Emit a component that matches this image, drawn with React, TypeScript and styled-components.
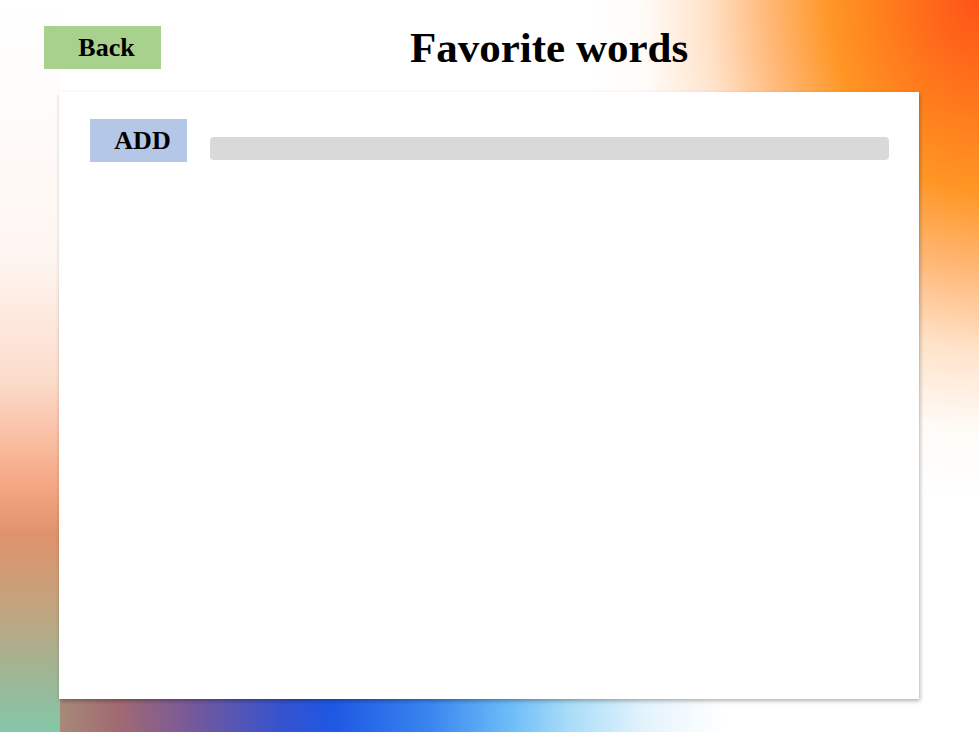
import React, { useState } from "react";
import styled, { createGlobalStyle } from "styled-components";

const GlobalStyle = createGlobalStyle`
  html, body {
    margin: 0;
    padding: 0;
  }
  body {
    font-family: "Liberation Serif", "Times New Roman", serif;
    background-color: #ffffff;
  }
`;

const Page = styled.div`
  width: 979px;
  height: 732px;
  overflow: hidden;
  background-color: #fff;
  background-image:
    linear-gradient(to bottom, rgba(255, 255, 255, 0) 0%, rgba(253, 240, 232, 0.6) 35%, #fcdccb 52%, #f6a884 66%, #e0926c 73%, #c2a47e 83%, #a4b392 91%, #84c6a8 100%),
    linear-gradient(to right, #86c4a4 0%, #a89078 5%, #a26a72 12%, #7a5a98 19%, #3452d0 29%, #1e58e4 34%, #3a86f0 44%, #6cbcf8 52%, #a8dcf8 58%, #e4f4fc 66%, rgba(255, 255, 255, 0) 74%),
    radial-gradient(ellipse 390px 500px at 100% 0%, #ff5218 0%, #ff7a1c 22%, #ff9624 38%, #ffb878 54%, rgba(255, 215, 180, 0.7) 70%, rgba(255, 245, 235, 0.4) 86%, rgba(255, 255, 255, 0) 100%);
  background-size: 60px 100%, 100% 40px, 100% 100%;
  background-position: 0 0, 0 100%, 0 0;
  background-repeat: no-repeat;
`;

const Header = styled.header`
  display: flex;
  align-items: flex-start;
  height: 92px;
  padding: 26px 0 0 44px;
  box-sizing: border-box;
`;

const BackButton = styled.button`
  width: 117px;
  height: 43px;
  border: none;
  background: #a9d18e;
  font-family: "Liberation Serif", "Times New Roman", serif;
  font-weight: 700;
  font-size: 26px;
  color: #000;
  padding: 0 0 0 8px;
  cursor: pointer;
`;

const Title = styled.h1`
  margin: 0 0 0 249px;
  font-size: 43px;
  font-weight: 700;
  line-height: 44px;
  color: #000;
`;

const Panel = styled.main`
  margin-left: 59px;
  width: 860px;
  height: 607px;
  background: #fff;
  box-shadow: 1px 2px 4px rgba(0, 0, 0, 0.3);
  padding: 27px 30px 0 31px;
  box-sizing: border-box;
`;

const Toolbar = styled.div`
  display: flex;
  align-items: flex-end;
  gap: 23px;
`;

const AddButton = styled.button`
  width: 97px;
  height: 43px;
  flex: none;
  border: none;
  background: #b4c7e7;
  font-family: "Liberation Serif", "Times New Roman", serif;
  font-weight: 700;
  font-size: 26px;
  color: #000;
  padding: 0 0 0 8px;
  cursor: pointer;
`;

const WordInput = styled.input`
  flex: 1;
  height: 23px;
  margin-bottom: 2px;
  border: none;
  border-radius: 4px;
  background: #d9d9d9;
  outline: none;
  padding: 0 8px;
  font-size: 16px;
  box-sizing: border-box;
`;

export default function App() {
  const [word, setWord] = useState("");

  return (
    <>
      <GlobalStyle />
      <Page>
        <Header>
          <BackButton>Back</BackButton>
          <Title>Favorite words</Title>
        </Header>
        <Panel>
          <Toolbar>
            <AddButton>ADD</AddButton>
            <WordInput value={word} onChange={(e) => setWord(e.target.value)} />
          </Toolbar>
        </Panel>
      </Page>
    </>
  );
}
